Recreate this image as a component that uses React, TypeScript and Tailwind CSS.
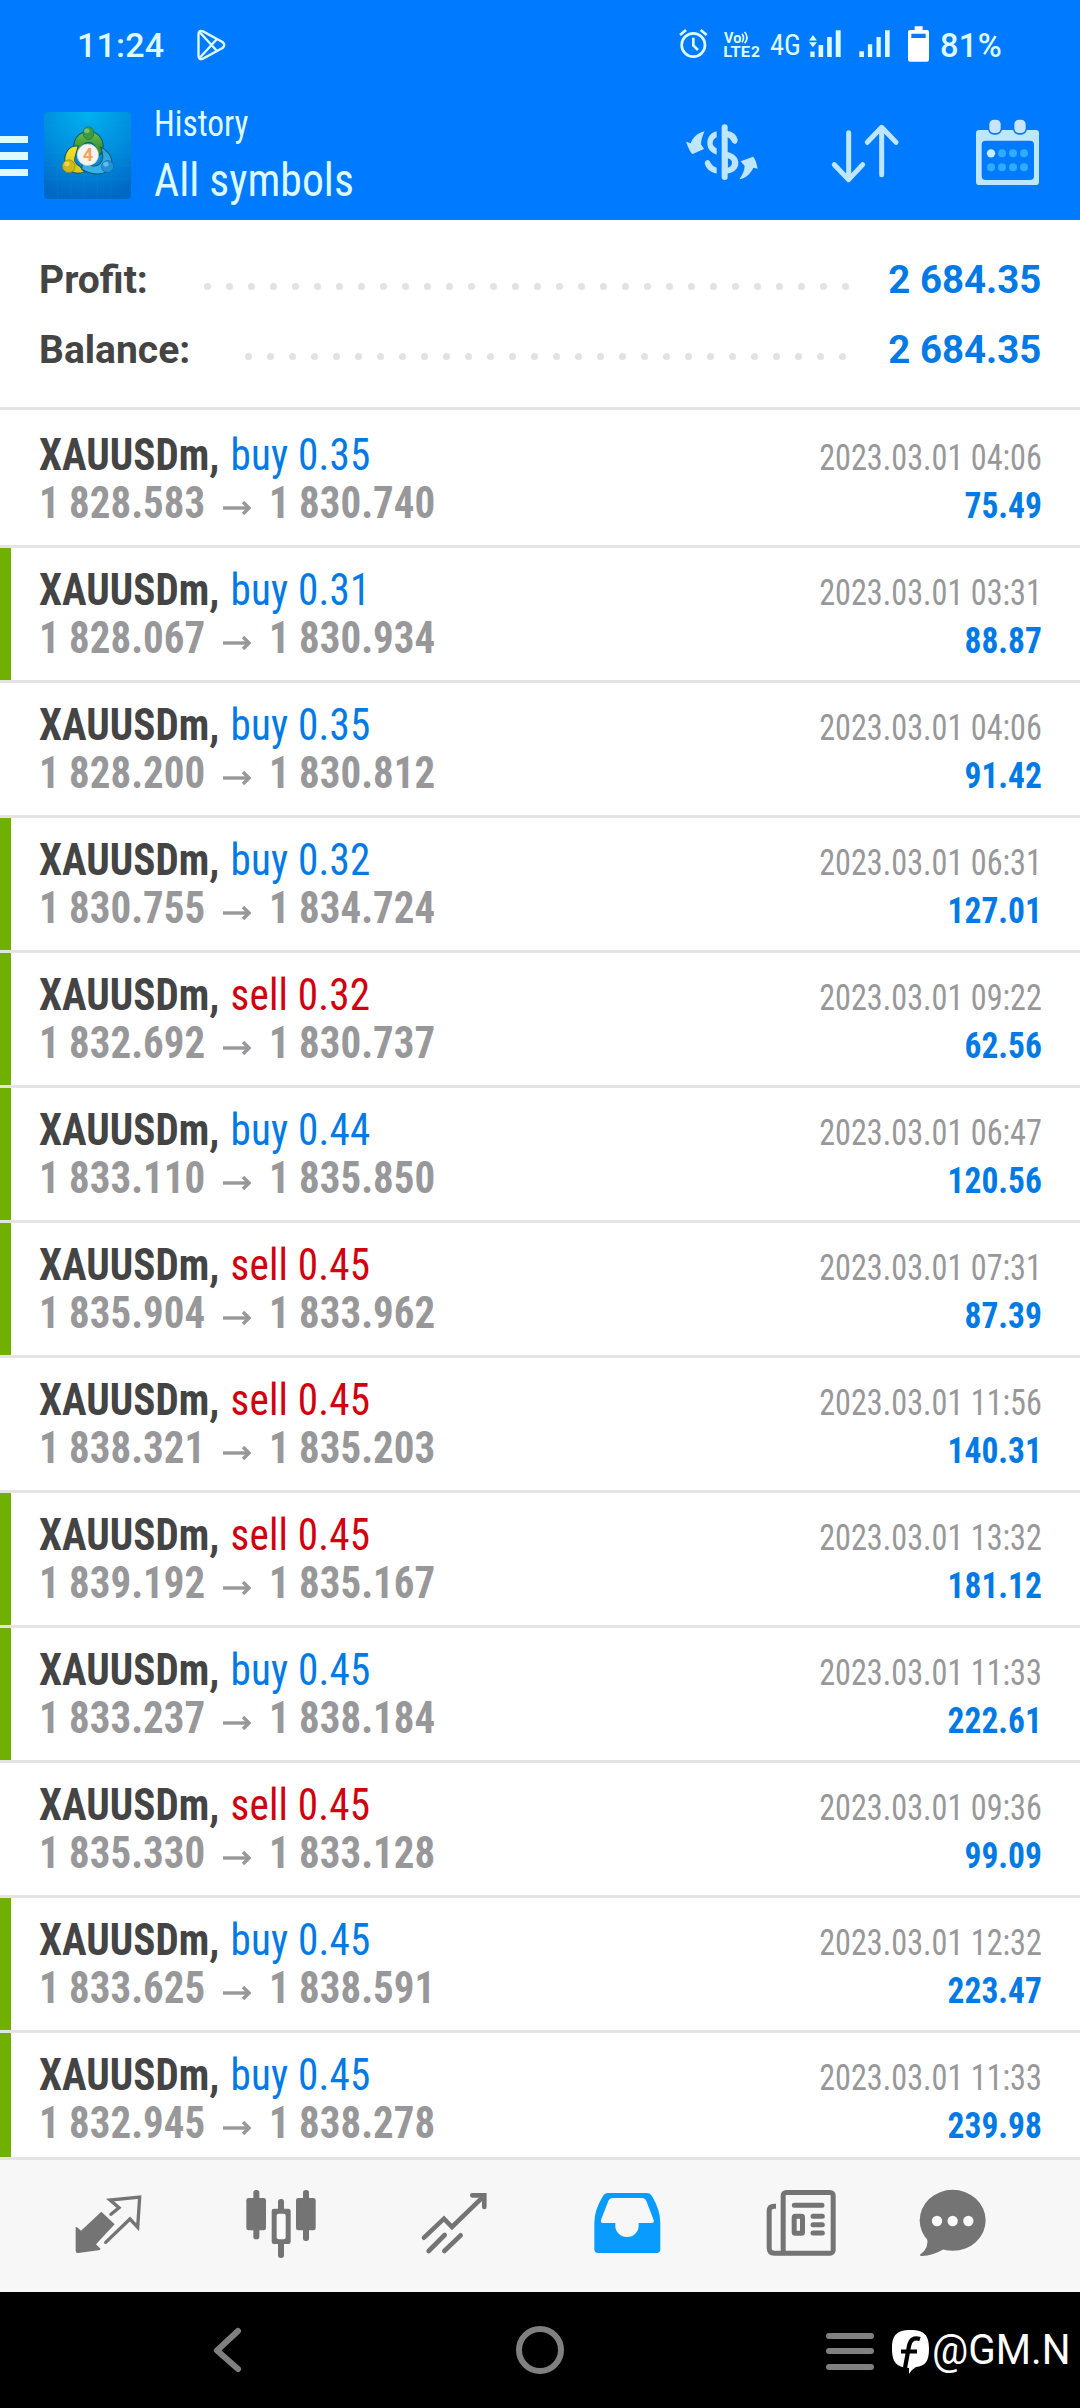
import { clsx } from 'clsx';

interface Deal {
  side: 'buy' | 'sell';
  volume: string;
  open: string;
  close: string;
  time: string;
  profit: string;
  marked?: boolean;
}

const deals: Deal[] = [
  { side: 'buy', volume: '0.35', open: '1 828.583', close: '1 830.740', time: '2023.03.01 04:06', profit: '75.49' },
  { side: 'buy', volume: '0.31', open: '1 828.067', close: '1 830.934', time: '2023.03.01 03:31', profit: '88.87', marked: true },
  { side: 'buy', volume: '0.35', open: '1 828.200', close: '1 830.812', time: '2023.03.01 04:06', profit: '91.42' },
  { side: 'buy', volume: '0.32', open: '1 830.755', close: '1 834.724', time: '2023.03.01 06:31', profit: '127.01', marked: true },
  { side: 'sell', volume: '0.32', open: '1 832.692', close: '1 830.737', time: '2023.03.01 09:22', profit: '62.56', marked: true },
  { side: 'buy', volume: '0.44', open: '1 833.110', close: '1 835.850', time: '2023.03.01 06:47', profit: '120.56', marked: true },
  { side: 'sell', volume: '0.45', open: '1 835.904', close: '1 833.962', time: '2023.03.01 07:31', profit: '87.39', marked: true },
  { side: 'sell', volume: '0.45', open: '1 838.321', close: '1 835.203', time: '2023.03.01 11:56', profit: '140.31' },
  { side: 'sell', volume: '0.45', open: '1 839.192', close: '1 835.167', time: '2023.03.01 13:32', profit: '181.12', marked: true },
  { side: 'buy', volume: '0.45', open: '1 833.237', close: '1 838.184', time: '2023.03.01 11:33', profit: '222.61', marked: true },
  { side: 'sell', volume: '0.45', open: '1 835.330', close: '1 833.128', time: '2023.03.01 09:36', profit: '99.09' },
  { side: 'buy', volume: '0.45', open: '1 833.625', close: '1 838.591', time: '2023.03.01 12:32', profit: '223.47', marked: true },
  { side: 'buy', volume: '0.45', open: '1 832.945', close: '1 838.278', time: '2023.03.01 11:33', profit: '239.98', marked: true },
];

function StatusBar() {
  return (
    <div className="flex h-[90px] items-center font-['Roboto'] text-[34px] font-medium text-[#dcfaff]">
      <span className="ml-[77px] w-[86px] tracking-[0.2px]">11:24</span>
      <svg className="ml-[33px] h-8 w-[31px]" viewBox="0 0 31 32" fill="none" stroke="currentColor" strokeWidth="2.4" strokeLinejoin="round">
        <path d="M2.5 5.5Q2.5.5 7 2.4L26.5 13Q30 16 26.5 19L7 29.6Q2.5 31.5 2.5 26.5Z" />
        <path d="M4 3.5 21 22M4 28.5 21 10" />
      </svg>
      <svg className="ml-[451px] h-10 w-[31px] shrink-0" viewBox="27 30 93 120" fill="none" stroke="currentColor" strokeWidth="8">
        <circle cx="73" cy="90" r="35" />
        <path d="M73 68V91L87 105" />
        <path d="M33 60 51 45M113 60 95 45" />
      </svg>
      <svg className="ml-[14px] h-10 w-[38px] shrink-0" viewBox="162 30 114 120" fill="currentColor">
        <text x="165" y="83" className="font-['Roboto'] text-[43px] font-bold" textLength="52" lengthAdjust="spacingAndGlyphs">Vo</text>
        <path d="M219 56q9 12 0 26M227 51q14 16 0 34" fill="none" stroke="currentColor" strokeWidth="5" />
        <text x="163" y="125" className="font-['Roboto'] text-[46px] font-bold" textLength="80" lengthAdjust="spacingAndGlyphs">LTE</text>
        <text x="246" y="125" className="font-['Roboto'] text-[42px] font-bold" textLength="27" lengthAdjust="spacingAndGlyphs">2</text>
      </svg>
      <span className="ml-[9px] w-[30px] origin-left scale-x-[0.95] pb-[2px] font-['Roboto_Condensed'] text-[30px] font-normal">4G</span>
      <svg className="ml-[9px] h-10 w-[33px] shrink-0" viewBox="420 30 100 120" fill="currentColor">
        <path d="M432 60 444 76H420ZM432 97 420 82H444Z" />
        <path d="M424 110h13v16h-13zM449 90h14v36h-14zM475 66h14v60h-14zM501 45h15v81h-15z" />
      </svg>
      <svg className="ml-4 h-10 w-[33px] shrink-0" viewBox="567 30 100 120" fill="currentColor">
        <path d="M571 109h14v17h-14zM597 88h13v38h-13zM623 66h13v60h-13zM649 45h14v81h-14z" />
      </svg>
      <svg className="ml-4 h-10 w-[23px] shrink-0" viewBox="714 30 69 120" fill="white" fillRule="evenodd">
        <path d="M737 34h24v11h13q6 0 6 6v83q0 6-6 6h-51q-6 0-6-6V51q0-6 6-6h14zM727 56v13h43V56z" />
      </svg>
      <span className="ml-[10px] origin-left scale-x-[0.96] whitespace-nowrap tracking-[0.3px]">81%</span>
    </div>
  );
}

function AppLogo() {
  return (
    <svg className="ml-4 size-[87px] shrink-0" viewBox="43 63 260 260">
      <defs>
        <radialGradient id="tile" cx="0.5" cy="0" r="1">
          <stop offset="0" stopColor="#00b2f0" />
          <stop offset="0.5" stopColor="#0090de" />
          <stop offset="1" stopColor="#0069c6" />
        </radialGradient>
        <linearGradient id="green" x1="0" y1="0" x2="0" y2="1">
          <stop offset="0" stopColor="#6fc04c" />
          <stop offset="1" stopColor="#1c7d2c" />
        </linearGradient>
        <linearGradient id="yellow" x1="0" y1="0" x2="0" y2="1">
          <stop offset="0" stopColor="#f5e52d" />
          <stop offset="1" stopColor="#d9c414" />
        </linearGradient>
        <linearGradient id="blue" x1="0" y1="0" x2="0" y2="1">
          <stop offset="0" stopColor="#2f9fdc" />
          <stop offset="1" stopColor="#37b4ec" />
        </linearGradient>
      </defs>
      <rect x="43" y="63" width="260" height="260" rx="12" fill="url(#tile)" />
      <path d="M83 63v260M123 63v260M163 63v260M203 63v260M243 63v260M43 103h260M43 143h260M43 183h260M43 223h260M43 263h260" stroke="#2aa5ea" strokeOpacity="0.18" strokeWidth="2" />
      <g stroke="#0b5a6c" strokeWidth="3">
        <path d="M133 181C127 148 144 121 176 121S226 148 218 184L203 196C199 166 192 154 176 154S154 166 150 180Z" fill="url(#green)" />
        <path d="M145 165C117 163 103 184 105 216C109 240 136 252 164 242L150 225C138 219 132 209 136 197Z" fill="url(#yellow)" />
        <path d="M212 168C242 182 252 208 242 232C226 252 188 254 156 234L158 212C177 226 198 228 210 218C222 206 220 186 212 168Z" fill="url(#blue)" />
      </g>
      <ellipse cx="176" cy="126" rx="16" ry="19" fill="#3c9a45" stroke="#1d6b33" strokeWidth="2" />
      <ellipse cx="171" cy="119" rx="8" ry="7" fill="#93cf86" fillOpacity="0.7" />
      <circle cx="117" cy="225" r="19" fill="#cfb81b" stroke="#8f8312" strokeWidth="2" />
      <ellipse cx="112" cy="218" rx="8" ry="7" fill="#f2e46b" fillOpacity="0.7" />
      <circle cx="233" cy="226" r="18" fill="#2492d2" stroke="#0f66a8" strokeWidth="2" />
      <ellipse cx="228" cy="219" rx="8" ry="7" fill="#7fcbf2" fillOpacity="0.7" />
      <circle cx="174" cy="191" r="32" fill="#f6f4f2" stroke="#c9c7c2" strokeWidth="2" />
      <text x="174" y="210" textAnchor="middle" className="font-['Roboto'] text-[54px] font-bold" fill="#f2a25c">4</text>
    </svg>
  );
}

function AppBar() {
  return (
    <div className="flex h-[130px] items-center text-[#bfe6ff]">
      <div className="flex w-7 flex-col gap-[9px] pt-[2px]">
        <div className="h-[7.5px] bg-[#dcfaff]" />
        <div className="h-[7.5px] bg-[#dcfaff]" />
        <div className="h-[7.5px] bg-[#dcfaff]" />
      </div>
      <AppLogo />
      <div className="ml-[23px] h-[112px] w-[320px] origin-left scale-x-[0.93] font-['Roboto_Condensed'] text-[#dcfaff]">
        <div className="text-[36px] leading-[50px]">History</div>
        <div className="text-[47px] leading-[61px]">All symbols</div>
      </div>
      <svg className="ml-[211px] h-[84px] w-[75px] shrink-0" viewBox="75 39 225 252" fill="currentColor">
        <path d="M194 82V231" stroke="currentColor" strokeWidth="18" strokeLinecap="round" />
        <path d="M170 94C152 98 142 112 142 129S152 158 170 164V145C162 141 158 136 158 129S162 116 170 112Z" />
        <path d="M134 190Q135 181 144 180Q150 181 152 189Q157 199 170 203V221Q140 215 134 190Z" />
        <path d="M200 92Q227 96 233 118Q233 130 225 132Q218 132 215 124Q211 114 200 110Z" />
        <path fillRule="evenodd" d="M200 155C222 160 235 172 235 188C235 206 221 219 200 221ZM203 175V203C211 201 216 196 216 188S211 177 203 175Z" />
        <path d="M134 94C128 106 123 120 123 133L132 147Q114 155 98 162Q90 158 78 125L92 130C98 113 112 99 134 94Z" />
        <path d="M238 238C246 226 254 212 254 198L242 184Q262 176 279 170Q287 176 293 206L280 203C273 219 260 233 238 238Z" />
      </svg>
      <svg className="ml-[70px] h-[84px] w-[70px] shrink-0" viewBox="510 39 210 252" fill="none" stroke="currentColor" strokeWidth="15" strokeLinecap="round" strokeLinejoin="round">
        <path d="M566 98V238M523 194 566 239 608 194" />
        <path d="M665 224V84M622 127 665 82 708 127" />
      </svg>
      <svg className="ml-[75px] h-[84px] w-[66px] shrink-0" viewBox="948 39 198 252">
        <path fill="currentColor" fillRule="evenodd" d="M961 90H1130Q1140 90 1140 100V245Q1140 255 1130 255H961Q951 255 951 245V100Q951 90 961 90ZM980 122Q968 122 968 134V228Q968 240 980 240H1113Q1125 240 1125 228V134Q1125 122 1113 122Z" />
        <rect x="987" y="55" width="42" height="49" rx="18" fill="#007bff" />
        <rect x="1062" y="55" width="42" height="49" rx="18" fill="#007bff" />
        <rect x="991" y="59" width="34" height="40" rx="14" fill="#c8e4ff" />
        <rect x="1066" y="59" width="34" height="40" rx="14" fill="#c8e4ff" />
        <circle cx="996" cy="160" r="12.5" fill="#c4efff" />
        <g fill="#2fabff">
          <circle cx="1029" cy="160" r="12" />
          <circle cx="1062" cy="160" r="12" />
          <circle cx="1095" cy="160" r="12" />
          <circle cx="996" cy="202" r="12" />
          <circle cx="1029" cy="202" r="12" />
          <circle cx="1062" cy="202" r="12" />
          <circle cx="1095" cy="202" r="12" />
        </g>
      </svg>
    </div>
  );
}

function SummaryRow({ label, value, dots }: { label: string; value: string; dots: number }) {
  return (
    <div className="flex h-[70px] items-center justify-end">
      <span className="mr-auto">{label}</span>
      <div className={clsx('flex gap-[15px] pt-[12px]', dots === 30 ? 'mr-[37px]' : 'mr-[40px]')}>
        {Array.from({ length: dots }, (_, i) => (
          <i key={i} className="size-[7px] rounded-full bg-[#e2e2e2]" />
        ))}
      </div>
      <span className="w-[155px] origin-right scale-x-[0.985] text-right whitespace-nowrap text-[#027ae6]">{value}</span>
    </div>
  );
}

function DealRow({ deal, first }: { deal: Deal; first: boolean }) {
  return (
    <div className={clsx('flex shrink-0 border-t-[3px] border-[#e4e4e4]', first ? 'h-[138px]' : 'h-[135px]')}>
      <div className={clsx('w-[11px] shrink-0', deal.marked && 'bg-[#70b000]')} />
      <div className={clsx("ml-[28px] flex-1 font-['Roboto_Condensed'] text-[44px] leading-[48px] font-bold whitespace-nowrap", first ? 'pt-[21px]' : 'pt-[18px]')}>
        <div className="origin-left scale-x-[0.935] text-[#444]">
          XAUUSDm,
          <span className={clsx('ml-3 font-[450] tracking-[0.2px]', deal.side === 'buy' ? 'text-[#027ae6]' : 'text-[#d2000f]')}>
            {deal.side} {deal.volume}
          </span>
        </div>
        <div className="flex items-center text-[#98989a]">
          <span className="w-[184px] origin-left scale-x-[0.93]">{deal.open}</span>
          <svg className="mt-[10px] mr-[18px] h-[14px] w-7" viewBox="0 0 28 14" fill="none" stroke="currentColor" strokeWidth="3.4">
            <path d="M0 7H25" />
            <path d="M20 1 26 7 20 13" />
          </svg>
          <span className="origin-left scale-x-[0.93]">{deal.close}</span>
        </div>
      </div>
      <div className={clsx("mr-[38px] text-right font-['Roboto_Condensed'] text-[36px] leading-[48px]", first ? 'pt-6' : 'pt-[21px]')}>
        <div className="origin-right scale-x-[0.895] text-[#98989a]">{deal.time}</div>
        <div className="origin-right scale-x-[0.93] font-bold text-[#027ae6]">{deal.profit}</div>
      </div>
    </div>
  );
}

function TabBar() {
  return (
    <div className="flex h-[135px] shrink-0 items-start border-t-[3px] border-[#e4e4e4] bg-[#f7f7f7] pt-5 text-[#747474]">
      <svg className="ml-[73.3px] h-[90px] w-[70px] shrink-0" viewBox="40 0 210 270">
        <path fill="currentColor" d="M125 95 165 133 109 193 123 207Q122 210 117 211L56 219Q48 220 48 212V142Q50 139 54 143L64 152Z" />
        <path fill="none" stroke="currentColor" strokeWidth="10" strokeLinecap="round" d="M154 103 178 83 151 60 240 51 234 142 211 117 138 187" />
      </svg>
      <svg className="ml-[101.7px] h-[90px] w-[71.7px] shrink-0" viewBox="555 0 215 270" fill="currentColor">
        <rect x="559" y="54" width="59" height="97" rx="7" />
        <rect x="580" y="30" width="18" height="148" rx="8" />
        <rect x="635" y="86" width="57" height="106" rx="7" />
        <rect x="654" y="57" width="18" height="177" rx="8" />
        <rect x="650" y="101" width="27" height="77" rx="6" fill="#f9f9f9" />
        <rect x="708" y="54" width="59" height="97" rx="7" />
        <rect x="729" y="30" width="18" height="153" rx="8" />
      </svg>
      <svg className="ml-[103.3px] h-[90px] w-[68.3px] shrink-0" viewBox="1080 0 205 270" fill="none" stroke="currentColor" strokeWidth="14" strokeLinecap="round">
        <path d="M1092 173 1152 116 1176 141 1270 50" />
        <path d="M1237 46H1273V81" />
        <path d="M1106 213 1154 165M1153 213 1202 166" />
      </svg>
      <svg className="ml-[105px] h-[90px] w-[68.3px] shrink-0" viewBox="40 0 205 270">
        <path
          fill="#0a9bff"
          fillRule="evenodd"
          d="M84 39H203Q212 39 217 48Q242 90 242 128V208Q242 219 231 219H55Q44 219 44 208V128Q44 90 70 48Q75 39 84 39ZM99 54Q90 54 86 63L64 120Q62 129 69 129H107V138A35 33 0 0 0 177 138V129H217Q224 129 222 120L200 63Q196 54 187 54Z"
        />
      </svg>
      <svg className="ml-[103.3px] h-[90px] w-[71.7px] shrink-0" viewBox="555 0 215 270" fill="none" stroke="currentColor" strokeWidth="15">
        <rect x="609.5" y="37.5" width="150" height="182" rx="9" />
        <path d="M588 79H583Q567.5 79 567.5 93V204Q567.5 219.5 583 219.5H615" />
        <path strokeLinecap="round" d="M643 76H726M699 109H727M699 134H727M699 159H727" />
        <rect x="642.5" y="108.5" width="25" height="51" rx="3" />
      </svg>
      <svg className="ml-[81.6px] h-[90px] w-[69px] shrink-0" viewBox="1015 0 207 270" fill="currentColor">
        <ellipse cx="1119" cy="121" rx="99" ry="91.5" />
        <path d="M1042 172Q1050 205 1021 224Q1020 228 1026 228Q1060 227 1092 208Z" />
        <g fill="#fafafa">
          <circle cx="1072" cy="123" r="15.5" />
          <circle cx="1119" cy="123" r="15.5" />
          <circle cx="1166" cy="123" r="15.5" />
        </g>
      </svg>
    </div>
  );
}

function SystemNav() {
  return (
    <div className="flex h-[116px] shrink-0 items-center bg-black text-[#808080]">
      <svg className="ml-[213px] h-[46px] w-[30px]" viewBox="0 0 30 46" fill="none" stroke="currentColor" strokeWidth="6" strokeLinecap="round" strokeLinejoin="round">
        <path d="M25 4 4 23.5 25 42" />
      </svg>
      <div className="ml-[273px] size-12 rounded-full border-[6px] border-[#808080]" />
      <div className="ml-[262px] flex w-12 flex-col gap-[9.5px] pt-[2px]">
        <div className="h-[6px] rounded-full bg-[#808080]" />
        <div className="h-[6px] rounded-full bg-[#808080]" />
        <div className="h-[6px] rounded-full bg-[#808080]" />
      </div>
      <svg className="mt-[3px] ml-[18px] h-11 w-[37px] shrink-0" viewBox="0 0 37 44">
        <path fill="#fff" d="M18.5 0C32 0 37 5 37 18.5C37 32 33 36 24 37Q20 39 17 44V38C4 37 0 32 0 18.5C0 5 5 0 18.5 0Z" />
        <path d="M28 9Q19 6 17 16L13 38M9 21.5H25" fill="none" stroke="#000" strokeWidth="4.2" />
      </svg>
      <span className="ml-[3px] origin-left scale-x-[0.95] font-['Roboto'] text-[42.5px] leading-none text-white">@GM.N</span>
    </div>
  );
}

export default function App() {
  return (
    <div className="flex h-[2408px] w-[1080px] flex-col overflow-hidden bg-white">
      <header className="h-[220px] shrink-0 bg-[#007bff]">
        <StatusBar />
        <AppBar />
      </header>
      <section className="h-[187px] shrink-0 pt-[25px] pr-[39px] pl-[39px] font-['Roboto'] text-[39px] font-bold text-[#444]">
        <SummaryRow label="Profit:" value="2 684.35" dots={30} />
        <SummaryRow label="Balance:" value="2 684.35" dots={28} />
      </section>
      <main className="flex min-h-0 flex-1 flex-col overflow-hidden">
        {deals.map((deal, i) => (
          <DealRow key={i} deal={deal} first={i === 0} />
        ))}
      </main>
      <TabBar />
      <SystemNav />
    </div>
  );
}
